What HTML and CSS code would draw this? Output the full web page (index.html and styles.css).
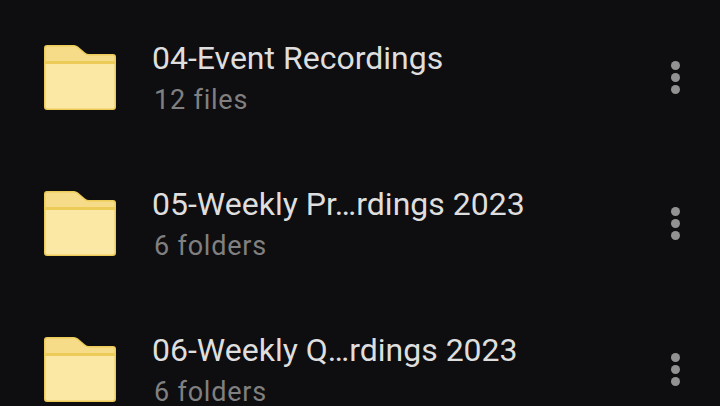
FILE: index.html
```html
<!DOCTYPE html>
<html lang="en">

<head>
    <meta charset="UTF-8">
    <meta name="viewport" content="width=device-width, initial-scale=1.0">
    <title>Files</title>
    <link rel="stylesheet" href="styles.css">
</head>

<body>
    <svg class="defs" width="0" height="0">
        <symbol id="folder" viewBox="0 0 72 65">
            <path d="M3 0H30Q32 0 34 1.500L41 7.500Q43 9 45 9H69Q72 9 72 12V62Q72 65 69 65H3Q0 65 0 62V3Q0 0 3 0Z" fill="#eccb58" />
            <path d="M1.500 19H70.500V61.500Q70.500 63.500 68.500 63.500H3.500Q1.500 63.500 1.500 61.500Z" fill="#fbe8a4" />
            <path d="M1.500 3Q1.500 1.500 3 1.500H30Q32 1.500 33 2.500L40 8.500Q42 10.500 45 10.500H69Q70.500 10.500 70.500 12V16H1.500Z" fill="#f6dc88" />
        </symbol>
    </svg>
    <ul class="list">
        <li class="row">
            <svg class="folder"><use href="#folder" /></svg>
            <div class="info">
                <div class="name">04-Event Recordings</div>
                <div class="meta">12 files</div>
            </div>
            <div class="more"><i></i><i></i><i></i></div>
        </li>
        <li class="row">
            <svg class="folder"><use href="#folder" /></svg>
            <div class="info">
                <div class="name">05-Weekly Pr…rdings 2023</div>
                <div class="meta">6 folders</div>
            </div>
            <div class="more"><i></i><i></i><i></i></div>
        </li>
        <li class="row">
            <svg class="folder"><use href="#folder" /></svg>
            <div class="info">
                <div class="name">06-Weekly Q…rdings 2023</div>
                <div class="meta">6 folders</div>
            </div>
            <div class="more"><i></i><i></i><i></i></div>
        </li>
    </ul>
</body>
</html>
```

FILE: styles.css
```css
* {
    margin: 0;
    box-sizing: border-box;
    padding: 0;
}

body {
    height: 406px;
    overflow: hidden;
    background: #0e0d0f;
    font-family: Roboto, "Liberation Sans", sans-serif;
}

.defs {
    display: block;
}

.list {
    list-style: none;
    padding-top: 4px;
}

.row {
    display: flex;
    align-items: center;
    height: 146px;
    padding: 0 40px 0 44px;
}

.folder {
    flex: none;
    width: 72px;
    height: 65px;
    margin-right: 36px;
}

.info {
    flex: 1;
}

.name {
    font-size: 32px;
    line-height: 40px;
    margin-top: 2px;
    color: #dedede;
}

.meta {
    margin: 4px 0 0 2px;
    font-size: 27px;
    line-height: 36px;
    letter-spacing: 0.8px;
    color: #808080;
}

.more {
    display: flex;
    flex-direction: column;
    gap: 3px;
}

.more i {
    display: block;
    width: 9px;
    height: 9px;
    border-radius: 50%;
    background: #929292;
}
```
